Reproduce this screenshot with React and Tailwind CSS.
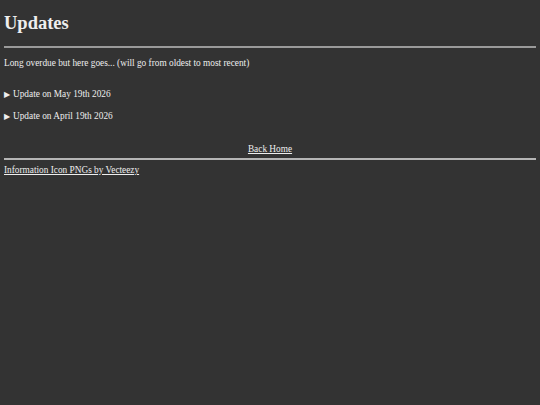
import React from 'react';

function Update({ title }) {
  return (
    <details className="mt-[11px]">
      <summary className="cursor-pointer list-none flex items-center">
        <span className="text-[8px] mr-[3px]">▶</span>
        {title}
      </summary>
    </details>
  );
}

export default function App() {
  return (
    <div className="min-h-[405px] bg-[#333333] text-[#eeeeee] px-[4px] pt-[12px] text-[9.3px] leading-[11px] font-['Liberation_Serif','Times_New_Roman',serif]">
      <h1 className="text-[18.5px] leading-[22px] font-bold">Updates</h1>
      <hr className="mt-[12px] border-0 h-[2px] bg-[#9a9a9a]" />
      <p className="mt-[10px]">Long overdue but here goes... (will go from oldest to most recent)</p>
      <div className="mt-[20px]">
        <Update title="Update on May 19th 2026" />
        <Update title="Update on April 19th 2026" />
      </div>
      <div className="mt-[22px] text-center">
        <a href="#" className="underline text-[#eeeeee]">Back Home</a>
      </div>
      <hr className="mt-[3px] border-0 h-[2px] bg-[#b5b5b5]" />
      <p className="mt-[5px]">
        <a href="#" className="underline">Information Icon PNGs by Vecteezy</a>
      </p>
    </div>
  );
}
